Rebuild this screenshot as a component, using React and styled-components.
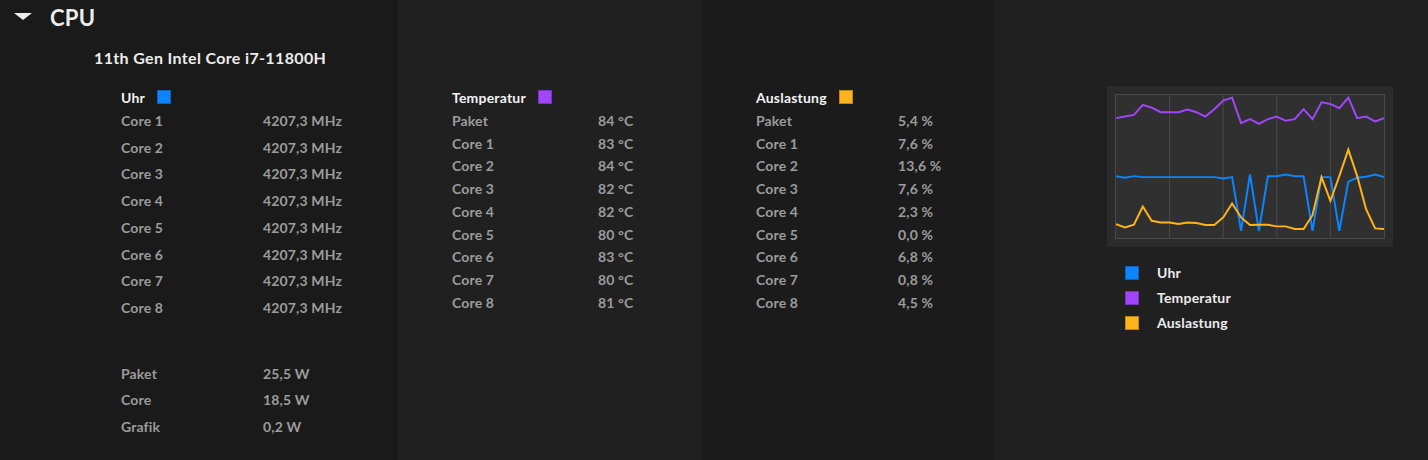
import styled, { createGlobalStyle } from "styled-components"

const GlobalStyle = createGlobalStyle`
  html, body {
    margin: 0;
    padding: 0;
    background: #1a1a1a;
    font-family: Lato, "Liberation Sans", sans-serif;
  }
`

const CHART = {
  uhr: [290, 295, 290, 293, 293, 293, 293, 293, 293, 293, 293, 293, 297, 293, 455, 285, 455, 290, 290, 285, 290, 290, 455, 293, 293, 455, 307, 295, 292, 285, 293],
  temp: [115, 110, 105, 75, 83, 97, 97, 97, 89, 97, 110, 88, 62, 53, 130, 118, 132, 118, 110, 123, 118, 88, 118, 67, 72, 85, 53, 115, 110, 125, 115],
  load: [435, 445, 437, 382, 425, 430, 430, 435, 430, 432, 438, 438, 415, 373, 415, 438, 437, 437, 442, 442, 450, 450, 408, 293, 365, 290, 210, 290, 390, 448, 450],
}

const COLORS = {
  uhr: "#0a84ff",
  temp: "#a145fb",
  load: "#ffb31a",
}

const clock = ["Core 1", "Core 2", "Core 3", "Core 4", "Core 5", "Core 6", "Core 7", "Core 8"].map((c) => [c, "4207,3 MHz"])
const power = [["Paket", "25,5 W"], ["Core", "18,5 W"], ["Grafik", "0,2 W"]]
const temps = [["Paket", "84 °C"], ["Core 1", "83 °C"], ["Core 2", "84 °C"], ["Core 3", "82 °C"], ["Core 4", "82 °C"], ["Core 5", "80 °C"], ["Core 6", "83 °C"], ["Core 7", "80 °C"], ["Core 8", "81 °C"]]
const loads = [["Paket", "5,4 %"], ["Core 1", "7,6 %"], ["Core 2", "13,6 %"], ["Core 3", "7,6 %"], ["Core 4", "2,3 %"], ["Core 5", "0,0 %"], ["Core 6", "6,8 %"], ["Core 7", "0,8 %"], ["Core 8", "4,5 %"]]

// chart samples were read off the reference, so map them into the 268x144 plot
function toPoints(values) {
  return values.map((v, i) => `${((i * 268) / 30).toFixed(1)},${(v / 3 - 15).toFixed(1)}`).join(" ")
}

function Table({ title, color, rows, rowHeight, labelWidth, gap = 0 }) {
  return (
    <div>
      {title && (
        <TableHead $gap={gap}>
          {title}
          <Swatch $color={color} />
        </TableHead>
      )}
      {rows.map(([label, value]) => (
        <Row key={label} $h={rowHeight} $lw={labelWidth}>
          <span>{label}</span>
          <span>{value}</span>
        </Row>
      ))}
    </div>
  )
}

export default function App() {
  return (
    <>
      <GlobalStyle />
      <Page>
        <Column $bg="#1a1a1a">
          <Header>
            <Caret viewBox="0 0 18 8">
              <polygon points="0,0 18,0 9,7" fill="#ececec" />
            </Caret>
            CPU
          </Header>
          <Model>11th Gen Intel Core i7-11800H</Model>
          <Block $pl={121} $pt={19}>
            <Table title="Uhr" color={COLORS.uhr} rows={clock} rowHeight={26.75} labelWidth={142} />
            <Spacer />
            <Table rows={power} rowHeight={26.5} labelWidth={142} />
          </Block>
        </Column>
        <Column $bg="#202020">
          <Block $pl={54} $pt={87}>
            <Table title="Temperatur" color={COLORS.temp} rows={temps} rowHeight={22.75} labelWidth={146} gap={2} />
          </Block>
        </Column>
        <Column $bg="#1b1b1b">
          <Block $pl={54} $pt={87}>
            <Table title="Auslastung" color={COLORS.load} rows={loads} rowHeight={22.75} labelWidth={142} gap={2} />
          </Block>
        </Column>
        <Column $bg="#202020">
          <Block $pl={113} $pt={86}>
            <ChartBox>
              <Plot viewBox="0 0 268 144" preserveAspectRatio="none">
                {[1, 2, 3, 4].map((n) => (
                  <line key={n} x1={n * 53.6} y1="0" x2={n * 53.6} y2="144" stroke="#4a4a4a" strokeWidth="1" />
                ))}
                <polyline points={toPoints(CHART.temp)} fill="none" stroke={COLORS.temp} strokeWidth="2" />
                <polyline points={toPoints(CHART.uhr)} fill="none" stroke={COLORS.uhr} strokeWidth="2" />
                <polyline points={toPoints(CHART.load)} fill="none" stroke={COLORS.load} strokeWidth="2" />
              </Plot>
            </ChartBox>
            <Legend>
              <LegendItem><Swatch $color={COLORS.uhr} />Uhr</LegendItem>
              <LegendItem><Swatch $color={COLORS.temp} />Temperatur</LegendItem>
              <LegendItem><Swatch $color={COLORS.load} />Auslastung</LegendItem>
            </Legend>
          </Block>
        </Column>
      </Page>
    </>
  )
}

const Page = styled.div`
  display: grid;
  grid-template-columns: 398px 304px 292px 1fr;
  min-height: 100vh;
`

const Column = styled.div`
  background: ${(p) => p.$bg};
`

const Header = styled.div`
  display: flex;
  align-items: center;
  height: 34px;
  padding-left: 14px;
  gap: 18px;
  color: #ececec;
  font-size: 22px;
  font-weight: 700;
  letter-spacing: 0.3px;
`

const Caret = styled.svg`
  width: 18px;
  height: 8px;
  margin-top: -1px;
`

const Model = styled.div`
  margin-top: 14px;
  padding-left: 94px;
  line-height: 20px;
  color: #ececec;
  font-size: 16px;
  font-weight: 700;
  letter-spacing: 0.35px;
`

const Block = styled.div`
  padding-left: ${(p) => p.$pl}px;
  padding-top: ${(p) => p.$pt}px;
`

const TableHead = styled.div`
  display: flex;
  align-items: center;
  gap: 12px;
  height: 20px;
  margin-bottom: ${(p) => p.$gap}px;
  color: #f2f2f2;
  font-size: 14px;
  font-weight: 700;
  letter-spacing: 0.2px;
`

const Swatch = styled.span`
  display: inline-block;
  width: 12px;
  height: 12px;
  background: ${(p) => p.$color};
  border: 1px solid rgba(0, 0, 0, 0.25);
  flex-shrink: 0;
`

const Row = styled.div`
  display: grid;
  grid-template-columns: ${(p) => p.$lw}px auto;
  align-items: center;
  height: ${(p) => p.$h}px;
  color: #9c9c9c;
  font-size: 14px;
  font-weight: 700;
  letter-spacing: 0.15px;
`

const Spacer = styled.div`
  height: 39px;
`

const ChartBox = styled.div`
  width: 286px;
  height: 161px;
  box-sizing: border-box;
  padding: 9px;
  background: #2b2b2b;
`

const Plot = styled.svg`
  display: block;
  width: 268px;
  height: 143px;
  background: #303030;
  outline: 1px solid #4a4a4a;
`

const Legend = styled.div`
  margin-top: 13px;
  padding-left: 18px;
`

const LegendItem = styled.div`
  display: flex;
  align-items: center;
  gap: 18px;
  height: 25px;
  color: #ececec;
  font-size: 14px;
  font-weight: 700;
  letter-spacing: 0.2px;
`
